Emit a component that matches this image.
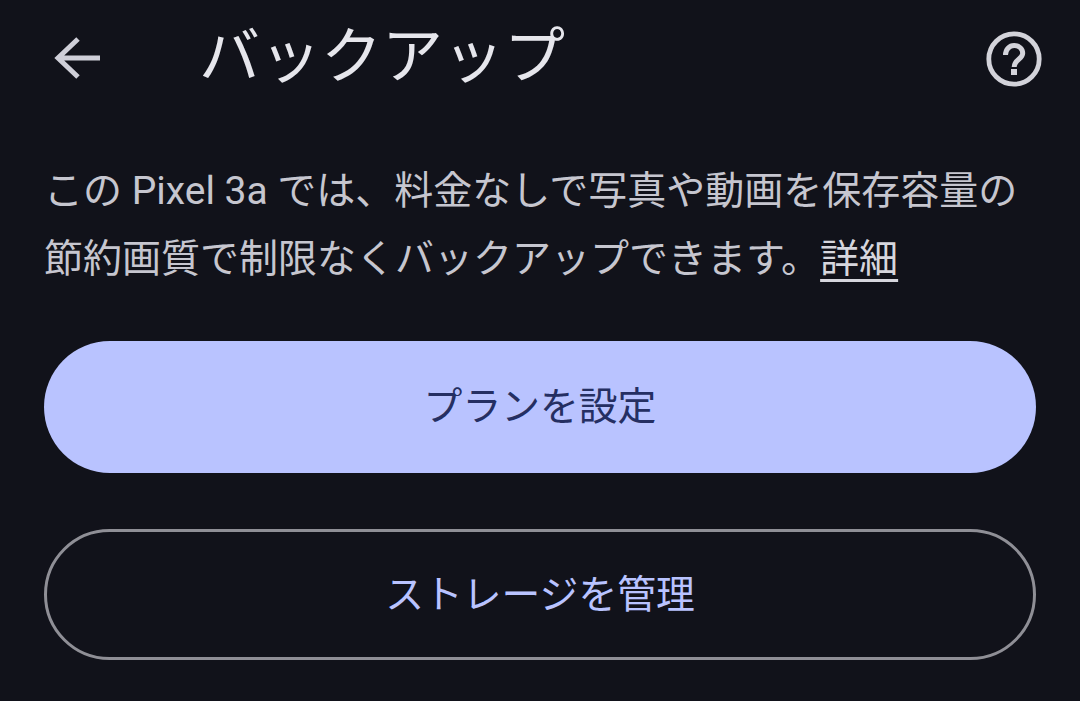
<div class="screen">
  <header>
    <svg class="back" viewBox="0 0 48 48" width="48" height="48" aria-hidden="true">
      <path d="M47 24H5M25 5 5 24l20 19" fill="none" stroke="#cfcfd8" stroke-width="5" />
    </svg>
    <h1>バックアップ</h1>
    <svg class="help" viewBox="0 0 56 56" width="56" height="56" aria-hidden="true">
      <circle cx="28" cy="28" r="25.2" fill="none" stroke="#d3d3da" stroke-width="4.8" />
      <path d="M19.5 24c0-5.500 3.800-9.500 8.700-9.500 5 0 8.500 3.500 8.500 7.700 0 6-8.500 6.300-8.500 13.800" fill="none" stroke="#d3d3da" stroke-width="5" />
      <rect x="25" y="38" width="6" height="6" fill="#d3d3da" />
    </svg>
  </header>

  <p class="desc">
    この Pixel 3a では、料金なしで写真や動画を保存容量の<br />節約画質で制限なくバックアップできます。<a href="#more">詳細</a>
  </p>

  <div class="actions">
    <button class="primary">プランを設定</button>
    <button class="outline">ストレージを管理</button>
  </div>
</div>

<style>
  :global(body) {
    background: #11121a;
  }

  .screen {
    height: 701px;
    box-sizing: border-box;
    overflow: hidden;
    background: #11121a;
    padding: 18px 38px 0 44px;
    font-family: "Roboto", "Noto Sans CJK JP", sans-serif;
  }

  header {
    display: flex;
    align-items: center;
    height: 74px;
  }

  .back {
    margin: 6px 0 0 9px;
    flex: none;
  }

  h1 {
    margin: 4px 0 0 98px;
    flex: 1;
    font-size: 61px;
    font-weight: 400;
    line-height: 74px;
    color: #e6e6ec;
  }

  .help {
    flex: none;
    margin-top: 8px;
  }

  .desc {
    margin: 65px 0 0;
    font-size: 39px;
    line-height: 68px;
    color: #c6c6cf;
    white-space: nowrap;
  }

  .desc a {
    color: #d6d6dd;
    text-decoration: underline;
    text-decoration-thickness: 3px;
    text-underline-offset: 7px;
  }

  .actions {
    display: flex;
    flex-direction: column;
    gap: 56px;
    margin-top: 48px;
    width: 992px;
  }

  button {
    display: block;
    width: 100%;
    box-sizing: border-box;
    padding: 0 0 8px;
    font: inherit;
    font-size: 38.8px;
    border-radius: 66px;
    color: #b9c3ff;
  }

  .primary {
    height: 132px;
    border: none;
    background: #b9c3ff;
    color: #252f62;
  }

  .outline {
    height: 131px;
    border: 3px solid #8f8f96;
    background: transparent;
  }
</style>
